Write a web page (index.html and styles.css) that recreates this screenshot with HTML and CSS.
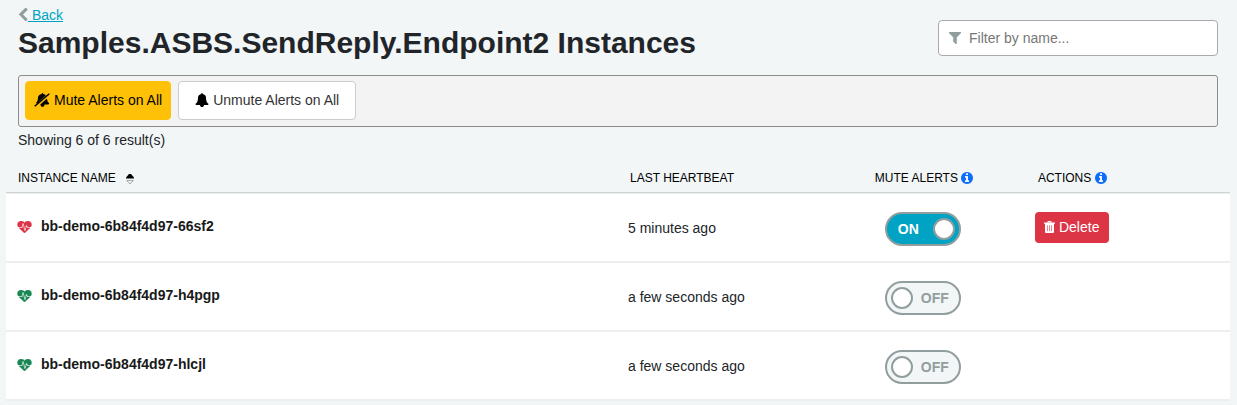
FILE: index.html
```html
<!DOCTYPE html>
<html lang="en">
<head>
<meta charset="utf-8">
<title>Endpoint Instances</title>
<link rel="stylesheet" href="styles.css">
</head>
<body>
<svg class="sprite" aria-hidden="true">
  <symbol id="chevron" viewBox="320 64 1152 1664"><path d="M1427 301l-531 531 531 531q19 19 19 45t-19 45l-166 166q-19 19-45 19t-45-19l-742-742q-19-19-19-45t19-45l742-742q19-19 45-19t45 19l166 166q19 19 19 45t-19 45z"/></symbol>
  <symbol id="bell" viewBox="0 0 1792 1792"><path d="M1728 1408q0 52-38 90t-90 38h-448q0 106-75 181t-181 75-181-75-75-181h-448q-52 0-90-38t-38-90q50-42 91-88t85-119.500 74.500-158.500 50-206 19.500-260q0-152 117-282.500t307-158.500q-8-19-8-39 0-40 28-68t68-28 68 28 28 68q0 20-8 39 190 28 307 158.500t117 282.500q0 139 19.500 260t50 206 74.500 158.500 85 119.500 91 88z"/></symbol>
  <symbol id="info" viewBox="128 128 1536 1536"><path d="M1152 1376v-160q0-14-9-23t-23-9h-96v-512q0-14-9-23t-23-9h-320q-14 0-23 9t-9 23v160q0 14 9 23t23 9h96v320h-96q-14 0-23 9t-9 23v160q0 14 9 23t23 9h448q14 0 23-9t9-23zm-128-896v-160q0-14-9-23t-23-9h-192q-14 0-23 9t-9 23v160q0 14 9 23t23 9h192q14 0 23-9t9-23zm640 416q0 209-103 385.500t-279.500 279.500-385.500 103-385.500-103-279.500-279.500-103-385.500 103-385.500 279.500-279.500 385.500-103 385.500 103 279.500 279.500 103 385.500z"/></symbol>
  <symbol id="filter" viewBox="192 256 1408 1408"><path d="M1595 295q17 41-14 70l-493 493v742q0 42-39 59-13 5-25 5-27 0-45-19l-256-256q-19-19-19-45v-486l-493-493q-31-29-14-70 17-39 59-39h1280q42 0 59 39z"/></symbol>
  <symbol id="trash" viewBox="0 0 11 12"><path fill-rule="evenodd" d="M3.500 1.500V.7q0-.7.7-.7h2.600q.7 0 .7.700v.8H11v1.200h-1V11q0 1-1 1H2q-1 0-1-1V2.700H0V1.500zm1 0h2V.9h-2zM3 4.200v6h.6v-6zm2.200 0v6h.6v-6zm2.200 0v6H8v-6z"/></symbol>
  <symbol id="heart" viewBox="0 0 1792 1536"><path d="M1280 896h305q-5 6-10 10.500t-9 7.500l-3 4-623 600q-18 18-44 18t-44-18l-624-602q-5-2-21-20h369q22 0 39.500-13.500t22.500-34.500l70-281 190 667q6 20 23 33t39 13q21 0 38-13t23-33l146-485 56 112q18 35 57 35zm512-428q0 145-103 300h-369l-111-221q-8-17-25.500-27t-36.500-8q-45 5-56 46l-129 430-196-686q-6-20-23.500-33t-39.500-13-39 13.500-22 34.500l-116 464h-423q-103-155-103-300 0-220 127-344t351-124q62 0 126.500 21.500t120 58 95.500 68.500 76 68q36-36 76-68t95.500-68.500 120-58 126.500-21.500q224 0 351 124t127 344z"/></symbol>
  <symbol id="bell-off" viewBox="0 0 16 14"><path d="M8.500 0c.5 0 .8.400.8.900 1.200.2 2 .7 2.600 1.400L3 10.300H1.700C3.400 8.700 4 7 4 4.500 4 2.500 5.500 1.200 7.700.9c0-.5.300-.9.800-.9zM13 5.400c.1 2.300.8 3.700 2 4.700.3.700-.1 1.300-.8 1.300h-3.700c0 1.500-.9 2.300-2 2.300s-2-.8-2-2.300h-.3zM14.800.3l1 .9L1.200 13.700l-1-1z"/></symbol>
</svg>

<header class="page-head">
  <div class="heading">
    <a class="back" href="#"><svg class="icon icon-back"><use href="#chevron"/></svg><span class="back-text">&nbsp;Back</span></a>
    <h1 class="title">Samples.ASBS.SendReply.Endpoint2 Instances</h1>
  </div>
  <label class="filter">
    <svg class="icon icon-filter"><use href="#filter"/></svg>
    <input class="filter-input" type="text" placeholder="Filter by name..." aria-label="Filter by name">
  </label>
</header>

<main>
  <div class="toolbar">
    <button class="btn btn-warning" type="button"><svg class="icon icon-bell-off"><use href="#bell-off"/></svg>Mute Alerts on All</button>
    <button class="btn btn-plain" type="button"><svg class="icon icon-bell"><use href="#bell"/></svg>Unmute Alerts on All</button>
  </div>
  <p class="count">Showing 6 of 6 result(s)</p>

  <table class="instances">
    <colgroup><col class="col-name"><col class="col-beat"><col class="col-mute"><col class="col-actions"></colgroup>
    <thead>
      <tr>
        <th scope="col"><button class="sort" type="button">INSTANCE NAME<svg class="icon-sort" viewBox="0 0 8 12"><path d="M0 5.500V4.500L3 1h2l3 3.500v1z"/><path class="sort-down" d="M.7 7.500h6.600L4 11z"/></svg></button></th>
        <th scope="col">LAST HEARTBEAT</th>
        <th scope="col">MUTE ALERTS <svg class="icon icon-info"><use href="#info"/></svg></th>
        <th scope="col">ACTIONS <svg class="icon icon-info"><use href="#info"/></svg></th>
      </tr>
    </thead>
    <tbody>
      <tr>
        <td><div class="name"><svg class="icon icon-heart dead"><use href="#heart"/></svg>bb-demo-6b84f4d97-66sf2</div></td>
        <td>5 minutes ago</td>
        <td><label class="toggle"><input class="toggle-input" type="checkbox" aria-label="Mute alerts for bb-demo-6b84f4d97-66sf2" checked><span class="track"><span class="knob"></span><span class="state">ON</span></span></label></td>
        <td class="actions"><button class="btn-delete" type="button"><svg class="icon icon-trash"><use href="#trash"/></svg>Delete</button></td>
      </tr>
      <tr>
        <td><div class="name"><svg class="icon icon-heart alive"><use href="#heart"/></svg>bb-demo-6b84f4d97-h4pgp</div></td>
        <td>a few seconds ago</td>
        <td><label class="toggle"><input class="toggle-input" type="checkbox" aria-label="Mute alerts for bb-demo-6b84f4d97-h4pgp"><span class="track"><span class="knob"></span><span class="state">OFF</span></span></label></td>
        <td class="actions"></td>
      </tr>
      <tr>
        <td><div class="name"><svg class="icon icon-heart alive"><use href="#heart"/></svg>bb-demo-6b84f4d97-hlcjl</div></td>
        <td>a few seconds ago</td>
        <td><label class="toggle"><input class="toggle-input" type="checkbox" aria-label="Mute alerts for bb-demo-6b84f4d97-hlcjl"><span class="track"><span class="knob"></span><span class="state">OFF</span></span></label></td>
        <td class="actions"></td>
      </tr>
    </tbody>
  </table>
</main>
</body>
</html>
```
FILE: styles.css
```css
* { box-sizing: border-box; }

body {
  margin: 0;
  padding: 5px 7px 0 6px;
  background: #f2f6f7;
  color: #212529;
  font: 14px/20px "Liberation Sans", Arial, sans-serif;
}

button, input { font: inherit; color: inherit; }

.sprite { display: none; }
.icon { fill: currentColor; flex: none; }

.page-head {
  display: flex;
  justify-content: space-between;
  align-items: flex-start;
  padding: 0 12px;
}

.back { display: flex; width: fit-content; align-items: center; color: #00a3c4; text-decoration: none; }
.back-text { text-decoration: underline; }
.icon-back { width: 10px; height: 14px; color: #929e9e; }

.title { margin: 0; font-size: 30px; line-height: 36px; font-weight: bold; }

.filter {
  display: flex;
  align-items: center;
  gap: 8px;
  width: 280px;
  height: 36px;
  margin-top: 15px;
  padding: 0 10px;
  background: #fff;
  border: 1px solid #aaa;
  border-radius: 4px;
}
.icon-filter { width: 12px; height: 12px; color: #929e9e; stroke: currentColor; stroke-width: 60px; }
.filter-input { flex: 1; min-width: 0; padding: 0; border: 0; outline: 0; background: none; }
.filter-input::placeholder { color: #777; opacity: 1; }

.toolbar {
  display: flex;
  gap: 7px;
  margin: 14px 12px 0;
  padding: 5px 6px 6px;
  background: #f3f3f3;
  border: 1px solid #8c8c8c;
  border-radius: 3px;
}
.btn {
  display: flex;
  align-items: center;
  height: 39px;
  border: 1px solid;
  border-radius: 4px;
}
.btn-warning { gap: 4px; padding: 0 8px 2px; background: #ffc107; border-color: #ffc107; color: #000; }
.btn-plain { gap: 4px; padding: 0 16px 2px; background: #fff; border-color: #ccc; color: #333; }
.icon-bell-off { width: 16px; height: 14px; }
.icon-bell { width: 14px; height: 14px; color: #000; }

.count { margin: 3px 12px 0; }

.instances { width: 100%; margin-top: 12px; border-collapse: separate; border-spacing: 0; table-layout: fixed; }
.col-name { width: 50%; }
.col-beat { width: 20%; }
.col-mute { width: 13.33%; }
.col-actions { width: 16.67%; }

.instances th {
  height: 31px;
  padding: 2px 12px 0;
  border-bottom: 1px solid #ced6d3;
  color: #000;
  font-size: 12px;
  font-weight: normal;
  text-align: left;
}
.sort { display: flex; align-items: center; gap: 10px; padding: 0; border: 0; background: none; }
.icon-sort { width: 8px; height: 12px; margin-top: 2px; }
.sort-down { fill: none; stroke: #aaa; }
.icon-info { width: 12px; height: 12px; color: #0d6efd; vertical-align: -2px; }

.instances td {
  height: 69px;
  padding: 1px 10px 0;
  background: #fff;
  border-bottom: 2px solid #eee;
}
.instances tbody tr:first-child td { height: 70px; border-top: 1px solid #eee; }
.name { display: flex; align-items: center; gap: 9px; padding: 0 0 4px 1px; color: #181919; font-weight: bold; }
.icon-heart { width: 15px; height: 12px; margin-top: 1px; stroke: currentColor; stroke-width: 50px; }
.dead { color: #dc3545; }
.alive { color: #198754; }

.toggle { display: block; width: 76px; margin: 2px 0 0 12px; }
.toggle-input { position: absolute; opacity: 0; }
.track {
  display: flex;
  align-items: center;
  gap: 8px;
  height: 34px;
  padding: 0 4px;
  background: #f2f6f7;
  border: 2px solid #929e9e;
  border-radius: 17px;
  color: #929e9e;
  font-weight: bold;
}
.knob { width: 22px; height: 22px; background: #fff; border: 2px solid #929e9e; border-radius: 50%; }
.toggle-input:checked + .track { flex-direction: row-reverse; justify-content: flex-start; gap: 14px; background: #00a3c4; color: #fff; }

.instances .actions { padding-left: 9px; }
.btn-delete {
  display: flex;
  align-items: center;
  gap: 4px;
  height: 31px;
  margin-bottom: 2px;
  padding: 0 10px 0 9px;
  background: #dc3545;
  border: 0;
  border-radius: 4px;
  color: #fff;
}
.icon-trash { width: 11px; height: 12px; }
```
